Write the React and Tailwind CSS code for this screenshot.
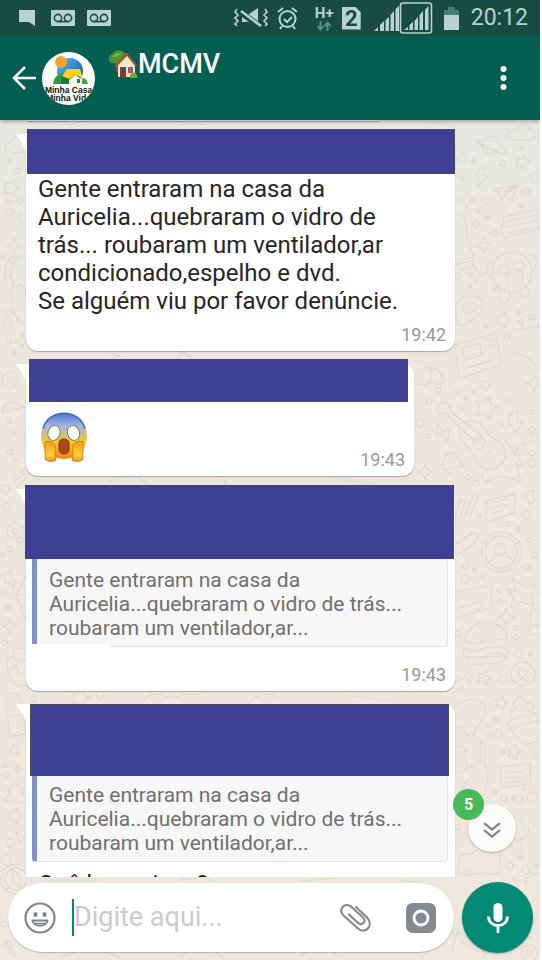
import React from "react";

const CIRCLES = [
  [10, 160, 2], [18, 171, 2.5], [9, 201, 2], [20, 201, 3], [9, 212, 4], [4, 257, 2], [8, 312, 3.5], [9, 341, 2],
  [8, 323, 4], [14, 353, 2], [10, 380, 8], [9, 421, 2.5], [13, 433, 2], [10, 452, 2.5], [16, 460, 2], [5, 489, 4], [7, 507, 3.5],
  [20, 540, 3], [3, 555, 2], [10, 549, 2.5], [4, 593, 3], [8, 607, 2.5], [5, 643, 2.5], [20, 655, 7], [5, 765, 2],
  [6, 775, 3], [11, 843, 4], [6, 860, 5], [4, 924, 3], [8, 945, 4], [100, 695, 4], [34, 699, 3],
  [462, 158, 4], [474, 161, 2], [503, 163, 3], [522, 148, 2], [462, 179, 2], [526, 192, 4], [488, 201, 4], [478, 211, 2], [487, 218, 2],
  [476, 224, 3], [495, 233, 3], [521, 205, 2], [536, 177, 5], [458, 276, 3], [497, 289, 2], [470, 286, 1.5], [519, 312, 2],
  [532, 317, 3], [507, 337, 3], [521, 322, 2.5], [485, 326, 2], [485, 385, 4], [438, 390, 2.5], [458, 391, 2.5], [466, 397, 2], [474, 392, 1.5],
  [429, 401, 3], [461, 408, 2], [420, 423, 4], [428, 436, 2.5], [501, 424, 2], [508, 402, 2.5], [532, 412, 2.5], [532, 430, 3],
  [536, 439, 4], [532, 453, 3], [524, 444, 2], [532, 463, 4], [468, 477, 2.5], [476, 483, 3], [527, 515, 4], [508, 524, 2.5], [518, 529, 2],
  [529, 540, 2.5], [534, 555, 3], [480, 516, 2], [466, 566, 3], [475, 570, 2], [465, 579, 4], [483, 576, 2], [527, 567, 3],
  [499, 591, 2], [500, 602, 2.5], [516, 628, 2.5], [516, 637, 2.5], [458, 634, 3], [519, 654, 4], [531, 654, 2], [468, 676, 3],
  [457, 679, 3], [503, 679, 4], [460, 690, 2.5], [469, 683, 1.5], [495, 720, 2.5], [488, 725, 2], [498, 734, 4], [489, 735, 2], [502, 752, 2.5],
  [536, 755, 3], [494, 792, 2.5], [504, 798, 3], [514, 797, 2], [519, 800, 4], [532, 797, 5], [524, 788, 2], [458, 827, 3], [510, 866, 3],
  [520, 858, 2], [526, 870, 4], [536, 866, 2], [515, 880, 2], [455, 932, 3], [468, 873, 2],
];

const STARS = [
  [11, 188, 9], [522, 162, 8], [503, 320, 8], [486, 408, 12], [484, 678, 8], [501, 703, 7], [514, 752, 8], [15, 816, 8], [80, 698, 10],
];

const SPARKS = [
  [14, 246, 8], [22, 341, 8], [467, 200, 9], [484, 245, 8], [476, 275, 8], [534, 383, 8], [425, 472, 8], [506, 617, 8], [10, 626, 8],
];

function Star({ x, y, r }) {
  const points = [];
  for (let i = 0; i < 10; i += 1) {
    const a = (Math.PI / 5) * i - 1.3;
    const k = i % 2 ? r * 0.5 : r;
    points.push(`${x + Math.cos(a) * k},${y + Math.sin(a) * k}`);
  }
  return <polygon points={points.join(" ")} />;
}

function Wallpaper() {
  return (
    <svg
      aria-hidden="true"
      className="absolute inset-0 h-full w-full"
      viewBox="0 0 540 960"
      preserveAspectRatio="xMidYMid slice"
      fill="none"
      stroke="#dedad0"
      strokeWidth="1.1"
      strokeLinejoin="round"
      strokeLinecap="round"
    >
      {CIRCLES.map(([x, y, r]) => (
        <circle key={`${x}-${y}`} cx={x} cy={y} r={r} />
      ))}
      {STARS.map(([x, y, r]) => (
        <Star key={`${x}-${y}`} x={x} y={y} r={r} />
      ))}
      {SPARKS.map(([x, y, r]) => (
        <path key={`${x}-${y}`} d={`M${x} ${y - r}q1 ${r - 1} ${r} ${r}q${1 - r} 1 ${-r} ${r}q-1 ${1 - r} ${-r} ${-r}q${r - 1} -1 ${r} ${-r}`} />
      ))}
      {/* clouds and planet */}
      <path d="M6 150c-2-6 3-9 6-8 2-8 12-10 15-2v12q-14 2-21-2z" />
      <path d="M509 139c-5-6 2-10 6-8 3-9 14-8 15-1 6-1 8 6 4 9q-12 3-25 0z" />
      <circle cx="491" cy="145" r="9" />
      <path d="M482 141c-9-4-8 0 4 6s22 10 20 4c-1-3-3-3-6-5M485 139l11 3M483 146l15 5" />
      {/* paper plane, bolts */}
      <path d="M494 189l23-4-5 16-8-5-3 5-1-7zM500 194l17-9-13 11" />
      <path d="M479 168l7 0-3 7 4 1-10 11 2-9-3-1z" />
      <path d="M510 413l8-2-1 9 6 2-8 12-2-9-4-1zM438 424l5 7 6-2-1 13-7-8-5 2zM526 492l8-2-2 7 4 3-8 5 1-5-4-2z" />
      <path d="M4 573l7-3 1 8 4 4-3 9-1-7-7-2z" />
      {/* ticket */}
      <path d="M542 208l-39 9 1 6-3 3 3 13 6-3 32-7M508 221l32-7M507 227l33-7M508 233l32-6" />
      {/* monkey */}
      <circle cx="512" cy="272" r="20" />
      <path d="M493 263c-8-5-8 10-1 16M530 256c7-5 8 9 3 14M507 284c-2-9 3-15 8-15s10 7 7 15M502 290a5 6 0 1 0 4 12 5 6 0 0 0 2-10M520 290a5 5 0 1 0 6-3" />
      <circle cx="503" cy="269" r="5" />
      <circle cx="519" cy="266" r="5" />
      {/* cap, doughnut, news */}
      <path d="M455 215l10 2 2 20 7 20-18 3M455 265l18-5v7l-15 4" />
      <path d="M455 305c5-10 30-12 28 0s-18 22-26 20zM462 306c4-5 16-4 14 2s-10 6-12 4 0-4-2-6z" />
      <path d="M455 345l41-12 5 31-42 15zM462 348l18-5 2 12-17 5zM484 341l10-2M485 347l10-2M466 368l28-8M515 330l27-4M510 352l18 5 10 12 4-1" />
      {/* foliage and guitar */}
      <path d="M415 361c15 0 19 10 15 22-7 3-13 1-15 0M424 368c13-2 20 5 20 15-9 3-14 0-16-3" />
      <path d="M438 405c4-6 14-1 13 7l31 24-6 7-30-30c-8 2-12-2-8-8zM459 427c2-8 12-6 18-5 11 4 8 12 16 16 9 4 13 8 12 18-2 12-14 15-22 12-8-5-9-10-12-17-6-7-10-11-12-24z" />
      <circle cx="479" cy="443" r="6" />
      <path d="M487 455l5-5M506 441l10 14 1-9 4 20-5-3 5 18-20-5-16 6-4-8" />
      {/* bell and notes */}
      <path d="M443 470c0-14 3-18 10-17 6 1 4 7 10 13zM448 473q3 2 5-1" />
      <path d="M455 520l5-21 5 2-6 20M464 518l10-24 4 2-9 22M486 501l29-7-1 19-23 8-5-2zM492 503l17-4M491 508l18-4M493 513l11-3" />
      <path d="M455 545l17-12 6 1-3 9-18 12M460 542l6 9" />
      {/* portrait badge */}
      <circle cx="501" cy="552" r="20" />
      <circle cx="501" cy="552" r="16" />
      <circle cx="500" cy="549" r="6" />
      <path d="M489 563c5-9 19-9 24-2" />
      {/* letter, hand and bottle */}
      <path d="M455 592l36-6 1 21-37 12M455 609l28-8M475 609l3 2 5-6" />
      <path d="M506 588l10 4-4-14 13 9 11-2-6 11 5 10-14-4-10 6 2-11zM530 596l10-3M533 597l-4 37 13 1M532 610l10 2M530 625l12 2" />
      {/* burger */}
      <path d="M465 641c1-24 40-26 42-2-6 3-9-2-13 2s-9-2-13 1-11 2-16-1zM463 648q10 6 20 1t26 1q1 4-4 4-10-3-17 1t-24 1zM465 658l42-2q-4 9-14 7l-22 2zM475 632h1M483 628h1M492 631h1" />
      <circle cx="523" cy="674" r="12" />
      <path d="M518 668l11 4-4 2 4 5-3 2-4-5-2 4z" />
      {/* ghost, ice cream, cat */}
      <path d="M455 706c15-12 34-6 30 8-2 10-9 9-10 17 0 8-8 6-10 0-2-5-6-4-10-4" />
      <path d="M520 696l6 7c10-3 9 8 3 9 9 0 10 5 8 9l5 2M520 696c-6 5-9 10-3 12-9 2-8 9-4 11-7 4-7 9-3 9l14 17 18-5M513 719l25-6M510 728l30-8" />
      <path d="M455 747c12-4 12 8 9 12 8 8 0 14-9 13M468 768c15-3 15-10 12-28 10 9 2 20 5 26s3 18 0 28M462 792c1-7 4-12 8-11" />
      <path d="M500 766l31-2-1 20-28 4zM506 773l18-2M506 778l9-1M506 783l15-2" />
      <path d="M516 822c6-8 9 0 8 10s-8 10-10 5M528 828c2 8-4 15-13 14M521 842l1 11M459 860c-3 14 0 19 12 15 13-5 19 2 26-1 6-4 1-12 3-20 2-12-12-14-24-3-9 8-14-3-17 9zM526 885c-3-8 3-9 6-8 1-5 7-5 9-2" />
      <path d="M452 950l5-18 25 13 2 13M460 940l18 12M470 900l6 30" />
      <circle cx="529" cy="953" r="8" />
      <circle cx="529" cy="953" r="3" />
      {/* left margin */}
      <path d="M26 225c-8-2-8-10-4-13M26 255c-14 2-20 20-12 28l-3 8c1 20 4 32 15 34M5 278c-2-14 5-23 14-22M6 276h6M6 268l7 3M10 261l5 5M16 287c8-8 10 3 10 10" />
      <path d="M2 412c4-16 14-9 24-4M2 412l24-5M14 478l12-9M14 482l12-9M16 487l10-8M26 430q-4 10 0 18" />
      <circle cx="15" cy="531" r="8" />
      <circle cx="15" cy="531" r="3" />
      <path d="M26 575l-10 20 10 26M16 595h10M6 657l25 4-3 24c-14 4-21-5-22-28zM8 659l14 16M16 668l1-7M16 668l-7 1" />
      <path d="M6 705c-3-14 14-16 15-2l5 30-16 4zM8 716l14-2M10 736l18-2M14 744c8 10 3 12 0 12s-6-3 0-12zM18 764c4 8 2 9 0 9s-4-2 0-9zM2 800c10-1 5-18 14-16s4 10 10 14l-1 5zM16 832l9 5-6 6z" />
      <circle cx="16" cy="879" r="15" />
      <circle cx="16" cy="879" r="11" />
      <path d="M12 870l8 6 1 12-8-6zM6 942l10 15M60 958c20-12 45-8 60 0M180 958l18-18 24 16M300 955l20-9 22 12" />
      {/* strips between bubbles */}
      <path d="M60 120l10 5 12-4M180 126c8-6 18 0 25-2M455 126l-30-4M110 353l12 4M180 357l2-6 8 6M110 482c12-8 16-2 26-6l12 8M225 484l-2-10M145 700c8-14 20 2 34-4s18 4 24-5M250 702c8-10 26-10 32 0M330 478l40 5M350 696l42 5M40 880h60M180 880l25-3 8 5M300 881l38-3M400 880l30 4" />
    </svg>
  );
}

function StatusBar() {
  return (
    <div className="flex h-9 items-center bg-[#184c43] pr-3 pl-[19px] text-[#b7d3ce]">
      <svg aria-hidden="true" className="mr-4 h-[18px] w-4" viewBox="0 0 16 18" fill="currentColor">
        <path d="M0 1h16v16l-6-4H0z" />
      </svg>
      {[0, 1].map((n) => (
        <svg key={n} aria-hidden="true" className="mr-3 h-4 w-6" viewBox="0 0 24 16">
          <rect width="24" height="16" rx="1" fill="currentColor" />
          <g fill="none" stroke="#184c43" strokeWidth="1.6">
            <circle cx="7" cy="8" r="3.6" />
            <circle cx="17" cy="8" r="3.6" />
            <path d="M7 11.6h10" />
          </g>
        </svg>
      ))}
      <span className="flex-1" />
      <svg aria-hidden="true" className="mr-[9px] h-[22px] w-[34px]" viewBox="0 0 34 22">
        <path d="M8 7h7l9-6v20l-9-6H8z" fill="currentColor" />
        <path d="M5 4l23 17" stroke="#184c43" strokeWidth="6" />
        <path d="M7 4l20 15" stroke="currentColor" strokeWidth="2.6" />
        <path d="M3 2l-2 3 3 3-3 3 3 3-3 3 2 2M31 2l2 3-3 3 3 3-3 3 3 3-2 2" fill="none" stroke="currentColor" strokeWidth="1.6" />
      </svg>
      <svg aria-hidden="true" className="mr-[17px] h-[24px] w-[21px]" viewBox="0 0 21 24" fill="none" stroke="currentColor" strokeWidth="2">
        <circle cx="10.500" cy="13" r="8" />
        <path d="M1 6l5-4M20 6l-5-4M5 20l-2 3M16 20l2 3M7 13l3 3 5-5" />
      </svg>
      <div className="mr-2 flex w-[19px] flex-col items-center">
        <span className="font-['Roboto'] text-[15px] leading-[15px] font-bold">H+</span>
        <svg aria-hidden="true" className="h-[10px] w-[14px]" viewBox="0 0 14 10" fill="none" stroke="#4f9585" strokeWidth="2">
          <path d="M3.500 0v8M0.500 5l3 3.500 3-3.500M10.500 10V2M7.500 5l3-3.500 3 3.500" />
        </svg>
      </div>
      <div className="mr-[13px] flex h-[23px] w-[19px] items-center justify-center bg-[#b7d3ce] font-['Roboto'] text-[22px] leading-[23px] font-bold text-[#184c43] [clip-path:polygon(0_0,70%_0,100%_25%,100%_100%,0_100%)]">
        2
      </div>
      <svg aria-hidden="true" className="h-[25px] w-[25px]" viewBox="0 0 25 25" fill="currentColor">
        <path d="M0 25l4-4v4zM6 19l4-4v10H6zM11.500 14l3.500-3v14h-3.500zM16.500 9L20 5v20h-3.500zM21.500 3L25 0v25h-3.500z" />
      </svg>
      <svg aria-hidden="true" className="mr-[11px] h-[32px] w-[34px]" viewBox="0 0 34 32" fill="currentColor">
        <rect x="1.500" y="1" width="31" height="30" rx="2.500" fill="none" stroke="currentColor" strokeWidth="1.600" />
        <path d="M5 28l4-3v3zM10.500 23l3.500-3v8h-3.500zM15.500 19l3.500-4v13h-3.500zM20.500 13l3.500-4v19h-3.500zM26 8l3.500-4v24H26z" />
      </svg>
      <svg aria-hidden="true" className="mr-3 h-[23px] w-[15px]" viewBox="0 0 15 23">
        <path d="M4 0h7v3h4v5H0V3h4z" fill="#437e70" />
        <path d="M0 8h15v15H0z" fill="currentColor" />
      </svg>
      <time className="font-['Roboto'] text-[23px] leading-9">20:12</time>
    </div>
  );
}

function GroupPhoto() {
  return (
    <svg role="img" aria-label="Minha Casa Minha Vida" className="h-[53px] w-[53px]" viewBox="0 0 53 53">
      <defs>
        <clipPath id="photo">
          <circle cx="26.500" cy="26.500" r="26.500" />
        </clipPath>
        <linearGradient id="sky" x1="0" y1="0" x2="1" y2="1">
          <stop offset="0" stopColor="#5db8ea" />
          <stop offset="1" stopColor="#0b55a5" />
        </linearGradient>
      </defs>
      <g clipPath="url(#photo)">
        <rect width="53" height="53" fill="#fff" />
        <circle cx="28" cy="19" r="13" fill="url(#sky)" />
        <path d="M11 32c1-8 6-11 10-9l3 9z" fill="#2f9b3e" />
        <path d="M38 32c1-7 6-8 8 0z" fill="#43a844" />
        <path d="M20 22l7 2 8 0v8H19z" fill="#157a3c" />
        <path d="M27 28l7-5 6 5v4H27z" fill="#fbfdf5" />
        <path d="M25 17l13 0 3 10-6-4-8 4-7-3z" fill="#ffd21c" />
        <path d="M35 27h3v4h-3z" fill="#2a7f46" />
        <circle cx="19" cy="10" r="6" fill="#f6a42b" />
        <g fontFamily="Liberation Sans, Arial, sans-serif" fontWeight="700" fontSize="8.5" fill="#111" textAnchor="middle">
          <text x="26.500" y="41">Minha Casa</text>
          <text x="26.500" y="49">Minha Vida</text>
        </g>
      </g>
    </svg>
  );
}

function HouseEmoji() {
  return (
    <svg aria-hidden="true" className="h-[29px] w-[30px]" viewBox="0 0 30 29">
      <path d="M7 10h3l1 12H8z" fill="#8a5427" />
      <path d="M1 8c0-4 4-4 5-6 4-3 9-2 11 1 4 1 4 6 0 8-3 3-7 1-9 2-4 1-8-1-7-5z" fill="#4c8f34" />
      <path d="M4 7c2-4 7-5 11-3-3 0-6 4-11 3z" fill="#77b24b" />
      <path d="M10 15l9-10 8 10v12H10z" fill="#f6e6c8" />
      <path d="M7 15L18 3l1 0 10 12-1 2-9-11-11 11z" fill="#a6512f" />
      <path d="M12 17h6v10h-6z" fill="#8e3a2b" />
      <path d="M14 18h3v4h-3z" fill="#3a4d78" />
      <path d="M20.500 17.500h4v5h-4z" fill="#5d7da8" stroke="#a45037" />
      <path d="M22 27c-1-5 7-6 7-1v2h-7z" fill="#76a63a" />
    </svg>
  );
}

function Header() {
  return (
    <header className="relative z-20 flex h-[84px] items-center bg-[#055e52] pr-[33px] pl-3 shadow-[0_2px_3px_rgba(0,0,0,0.25)]">
      <button type="button" aria-label="Voltar" className="mr-[6px] text-white">
        <svg className="h-6 w-6" viewBox="0 0 24 24" fill="none" stroke="currentColor" strokeWidth="2.500">
          <path d="M24 12H2M13 1L2 12l11 11" />
        </svg>
      </button>
      <GroupPhoto />
      <div className="ml-[13px] flex flex-1 items-center self-start pt-3">
        <HouseEmoji />
        <h1 className="font-['Roboto'] text-[27px] leading-8 font-medium text-white">MCMV</h1>
      </div>
      <button type="button" aria-label="Mais opções" className="text-white">
        <svg className="h-6 w-[7px]" viewBox="0 0 7 24" fill="currentColor">
          <circle cx="3.500" cy="3" r="3" />
          <circle cx="3.500" cy="12" r="3" />
          <circle cx="3.500" cy="21" r="3" />
        </svg>
      </button>
    </header>
  );
}

function Tail() {
  return <span aria-hidden="true" className="absolute top-0 -left-[10px] h-4 w-3 bg-white [clip-path:polygon(0_0,100%_0,100%_100%,83%_100%)]" />;
}

function Bubble({ className = "", children }) {
  return (
    <li className={`relative rounded-xl rounded-tl-none bg-white shadow-[0_1px_1px_rgba(0,0,0,0.28)] ${className}`}>
      <Tail />
      {children}
    </li>
  );
}

function Time({ className = "", children }) {
  return (
    <time className={`block pr-[9px] pb-[5px] text-right text-lg leading-[22px] text-[#989898] ${className}`}>{children}</time>
  );
}

function Quote({ className }) {
  return (
    <blockquote
      className={`mr-[7px] ml-[6px] rounded-br rounded-bl border-r border-b border-l-[5px] border-r-[#e6e7e8] border-b-[#e2e3e4] border-l-[#8192c6] bg-[#f7f7f7] pl-3 text-[21px] leading-6 text-[#707070] ${className}`}
    >
      Gente entraram na casa da
      <br />
      Auricelia...quebraram o vidro de trás...
      <br />
      roubaram um ventilador,ar...
    </blockquote>
  );
}

function ScreamEmoji() {
  return (
    <svg role="img" aria-label="Rosto gritando de medo" className="h-[50px] w-12" viewBox="0 0 48 50">
      <defs>
        <linearGradient id="face" x1="0" y1="0" x2="0" y2="1">
          <stop offset="0" stopColor="#4a74d0" />
          <stop offset="0.28" stopColor="#a5b5e2" />
          <stop offset="0.5" stopColor="#d3c371" />
          <stop offset="0.64" stopColor="#fcc526" />
          <stop offset="1" stopColor="#ee8a12" />
        </linearGradient>
        <linearGradient id="hand" x1="0" y1="0" x2="0" y2="1">
          <stop offset="0" stopColor="#f39a1c" />
          <stop offset="0.7" stopColor="#fdd03a" />
          <stop offset="1" stopColor="#ee921c" />
        </linearGradient>
      </defs>
      <circle cx="24" cy="24" r="23" fill="url(#face)" />
      <path d="M3 17C8-4 40-4 45 17" fill="none" stroke="#4267bd" strokeWidth="1.500" />
      <g fill="#fff" stroke="#80834c" strokeWidth="1">
        <ellipse cx="14" cy="21" rx="6" ry="7.500" transform="rotate(18 14 21)" />
        <ellipse cx="33.500" cy="21" rx="6" ry="7.500" transform="rotate(-18 33.500 21)" />
      </g>
      <rect x="19" y="27" width="10" height="15" rx="4.500" fill="#a9481c" stroke="#7c3215" />
      <g fill="url(#hand)" stroke="#d67a1a" strokeWidth="1">
        <path d="M5 30c4-2 9 0 10 4 1 5-1 10 1 14-3 2-9 2-11-1 1-6-1-11 0-17z" />
        <path d="M43 30c-4-2-9 0-10 4-1 5 1 10-1 14 3 2 9 2 11-1-1-6 1-11 0-17z" />
      </g>
    </svg>
  );
}

function Conversation() {
  return (
    <main className="relative min-h-0 flex-1">
      <div className="h-full overflow-hidden">
        <ul className="flex flex-col gap-[13px] pr-[85px] pl-[26px]">
          <li aria-hidden="true" className="mr-[76px] h-px bg-white shadow-[0_1px_1px_rgba(0,0,0,0.28)]" />
          <Bubble>
            <div className="relative -mt-[5px] ml-px h-[45px] border border-[#4b4a5c] bg-[#3f4094]" />
            <p className="px-3 pt-px text-2xl leading-7 text-[#262626]">
              Gente entraram na casa da
              <br />
              Auricelia...quebraram o vidro de
              <br />
              trás... roubaram um ventilador,ar
              <br />
              condicionado,espelho e dvd.
              <br />
              Se alguém viu por favor denúncie.
            </p>
            <Time className="pt-[9px]">19:42</Time>
          </Bubble>
          <Bubble className="mr-[41px]">
            <div className="relative -mt-[5px] mr-[6px] ml-[3px] h-[43px] border border-[#4b4a5c] bg-[#3f4094]" />
            <div className="flex items-end justify-between pl-[14px]">
              <div className="pt-[10px] pb-[14px]">
                <ScreamEmoji />
              </div>
              <Time>19:43</Time>
            </div>
          </Bubble>
          <Bubble>
            <div className="relative -mt-1 -ml-px mr-px h-[74px] bg-[#3f4094]" />
            <div className="relative">
              <Quote className="pt-[9px] pb-[6px]" />
              <span aria-hidden="true" className="absolute bottom-0 left-1 h-[3px] w-20 bg-white" />
            </div>
            <Time className="pt-[17px]">19:43</Time>
          </Bubble>
          <Bubble>
            <div className="relative mr-[6px] ml-1 h-[72px] border border-[#4b4a5c] bg-[#3f4094]" />
            <Quote className="pt-[7px] pb-[6px]" />
            <p className="px-3 pt-2 text-2xl leading-7 text-[#262626]">Quê horas isso?</p>
          </Bubble>
        </ul>
      </div>
      <button
        type="button"
        aria-label="Ir para as mensagens mais recentes"
        className="absolute right-6 bottom-[25px] flex h-12 w-12 items-center justify-center rounded-full bg-[#fbfcfa] text-[#7f8283] shadow-[0_1px_2px_rgba(0,0,0,0.25)]"
      >
        <svg aria-hidden="true" className="mt-1 h-4 w-[18px]" viewBox="0 0 18 16" fill="none" stroke="currentColor" strokeWidth="2.200">
          <path d="M1 1l8 6.500L17 1M1 8l8 6.500L17 8" />
        </svg>
        <span className="absolute -top-[15px] -left-[15px] flex h-[31px] w-[31px] items-center justify-center rounded-full bg-[#48b95a] text-base font-bold text-white">
          5
        </span>
      </button>
    </main>
  );
}

function Composer() {
  return (
    <form className="relative flex items-center gap-2 pt-[5px] pr-[7px] pb-[7px] pl-2" onSubmit={(e) => e.preventDefault()}>
      <div className="flex h-[69px] min-w-0 flex-1 items-center rounded-full bg-white pr-[18px] pl-4 shadow-[0_1px_1px_rgba(0,0,0,0.22)]">
        <button type="button" aria-label="Emojis" className="mr-4 text-[#7d868b]">
          <svg className="h-8 w-8" viewBox="0 0 32 32" fill="none" stroke="currentColor" strokeWidth="2.200">
            <circle cx="16" cy="16" r="14.500" />
            <ellipse cx="11.500" cy="12.500" rx="2" ry="2.600" fill="currentColor" stroke="none" />
            <ellipse cx="20.500" cy="12.500" rx="2" ry="2.600" fill="currentColor" stroke="none" />
            <path d="M8.500 18.500h15c-1 7-14 7-15 0z" strokeWidth="1.800" />
            <path d="M10.500 21.500h11" strokeWidth="1.500" />
          </svg>
        </button>
        <input
          type="text"
          aria-label="Mensagem"
          placeholder="Digite aqui..."
          className="h-[37px] min-w-0 flex-1 border-l-2 border-[#058977] bg-transparent text-[27px] leading-[37px] text-[#262626] outline-none placeholder:text-[#c9cccf]"
        />
        <button type="button" aria-label="Anexar" className="mr-[35px] text-[#868a8b]">
          <svg className="h-[30px] w-8" viewBox="0 0 32 30" fill="none" stroke="currentColor" strokeWidth="2.200" strokeLinecap="round" strokeLinejoin="round">
            <path d="M17 4L28 14.500C35 22 27 32 19 25.500L4 12C-1 6 6-1 12 3.500L24 14.500C28 19 23 23 19 20L10 11.500" />
          </svg>
        </button>
        <button type="button" aria-label="Câmera" className="text-[#848b90]">
          <svg className="h-[30px] w-[30px]" viewBox="0 0 30 30">
            <rect width="30" height="30" rx="6.500" fill="currentColor" />
            <circle cx="15" cy="15" r="7" fill="none" stroke="#fff" strokeWidth="2.800" />
          </svg>
        </button>
      </div>
      <button
        type="button"
        aria-label="Gravar mensagem de voz"
        className="flex h-[71px] w-[71px] shrink-0 items-center justify-center rounded-full bg-[#058977] text-white shadow-[0_1px_2px_rgba(0,0,0,0.3)]"
      >
        <svg className="h-[30px] w-[22px]" viewBox="0 0 22 30">
          <rect x="6.500" y="0" width="9" height="19" rx="4.500" fill="currentColor" />
          <path d="M1.500 13.500c0 12 19 12 19 0M11 22v8" fill="none" stroke="currentColor" strokeWidth="2.800" />
        </svg>
      </button>
    </form>
  );
}

export default function App() {
  return (
    <div className="h-screen bg-white pr-[2px] font-['Roboto',sans-serif]">
      <div className="relative flex h-full flex-col overflow-hidden bg-linear-to-b from-[#e6e7e1] from-10% via-[#ece6dc] via-40% to-[#efe6dd]">
        <Wallpaper />
        <div className="relative z-20">
          <StatusBar />
          <Header />
        </div>
        <Conversation />
        <Composer />
      </div>
    </div>
  );
}
